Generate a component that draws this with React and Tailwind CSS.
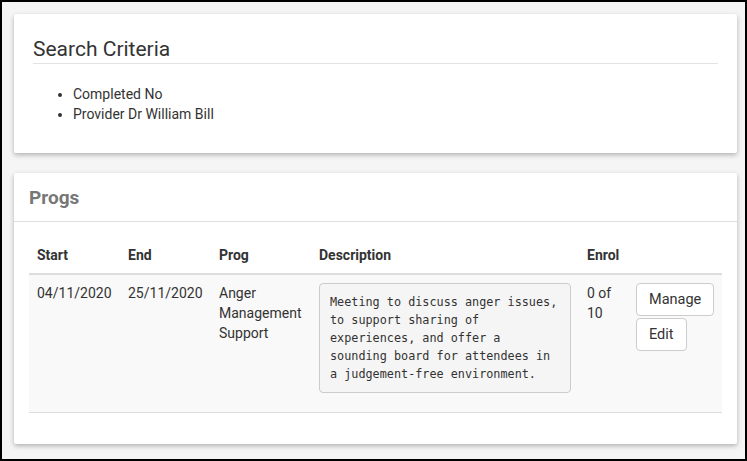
const DESCRIPTION = `Meeting to discuss anger issues,
to support sharing of
experiences, and offer a
sounding board for attendees in
a judgement-free environment.`;

const COLS = [
  { label: 'Start', w: 'w-[91px]' },
  { label: 'End', w: 'w-[91px]' },
  { label: 'Prog', w: 'w-[100px]' },
  { label: 'Description', w: 'w-[268px]' },
  { label: 'Enrol', w: 'w-[49px]' },
  { label: '', w: '' },
];

export default function App() {
  return (
    <div className="h-[461px] w-[747px] overflow-hidden border-2 border-black bg-[#f5f5f5] text-[#333] font-['Roboto',sans-serif]">
      <div className="flex flex-col gap-5 pl-3 pr-2 pt-3">
        <div className="bg-white rounded-[2px] shadow-[0_2px_5px_rgba(0,0,0,0.28)] px-[19px] pt-[24px] pb-[29px]">
          <h2 className="text-[21px] leading-[23px] pb-[2px] border-b border-[#e3e3e3] text-[#333]">Search Criteria</h2>
          <ul className="mt-5 pl-10 list-disc text-sm leading-5">
            <li>Completed No</li>
            <li>Provider Dr William Bill</li>
          </ul>
        </div>

        <div className="bg-white rounded-[2px] shadow-[0_2px_5px_rgba(0,0,0,0.28)]">
          <div className="h-[49px] flex items-center px-[15px] pt-[2px] border-b border-[#dddddd]">
            <h3 className="text-[19px] font-bold text-[#777]">Progs</h3>
          </div>
          <div className="px-[15px] pt-[15px] pb-[31px]">
            <table className="w-full table-fixed text-sm leading-5 border-collapse">
              <thead>
                <tr className="border-b-2 border-[#dddddd]">
                  {COLS.map(c => (
                    <th key={c.label || 'actions'} className={`${c.w} px-2 py-2 text-left font-bold align-bottom`}>{c.label}</th>
                  ))}
                </tr>
              </thead>
              <tbody>
                <tr className="bg-[#f9f9f9] border-b border-[#dddddd] align-top">
                  <td className="px-2 py-2">04/11/2020</td>
                  <td className="px-2 py-2">25/11/2020</td>
                  <td className="px-2 py-2">Anger<br />Management<br />Support</td>
                  <td className="px-2 pt-2 pb-[9px]">
                    <pre className="mb-[10px] w-[252px] h-[110px] px-[10px] pt-[9px] rounded border border-[#cccccc] bg-[#f5f5f5] text-[11.8px] leading-[18px] text-[#333] whitespace-pre font-['DejaVu_Sans_Mono',monospace]">{DESCRIPTION}</pre>
                  </td>
                  <td className="px-2 py-2">0 of<br />10</td>
                  <td className="px-2 py-2">
                    <div className="flex flex-col items-start gap-[2px]">
                      <button className="h-[33px] px-3 bg-white border border-[#cccccc] rounded text-[14.5px] text-[#333]">Manage</button>
                      <button className="h-[33px] px-3 bg-white border border-[#cccccc] rounded text-[14.5px] text-[#333]">Edit</button>
                    </div>
                  </td>
                </tr>
              </tbody>
            </table>
          </div>
        </div>
      </div>
    </div>
  );
}
